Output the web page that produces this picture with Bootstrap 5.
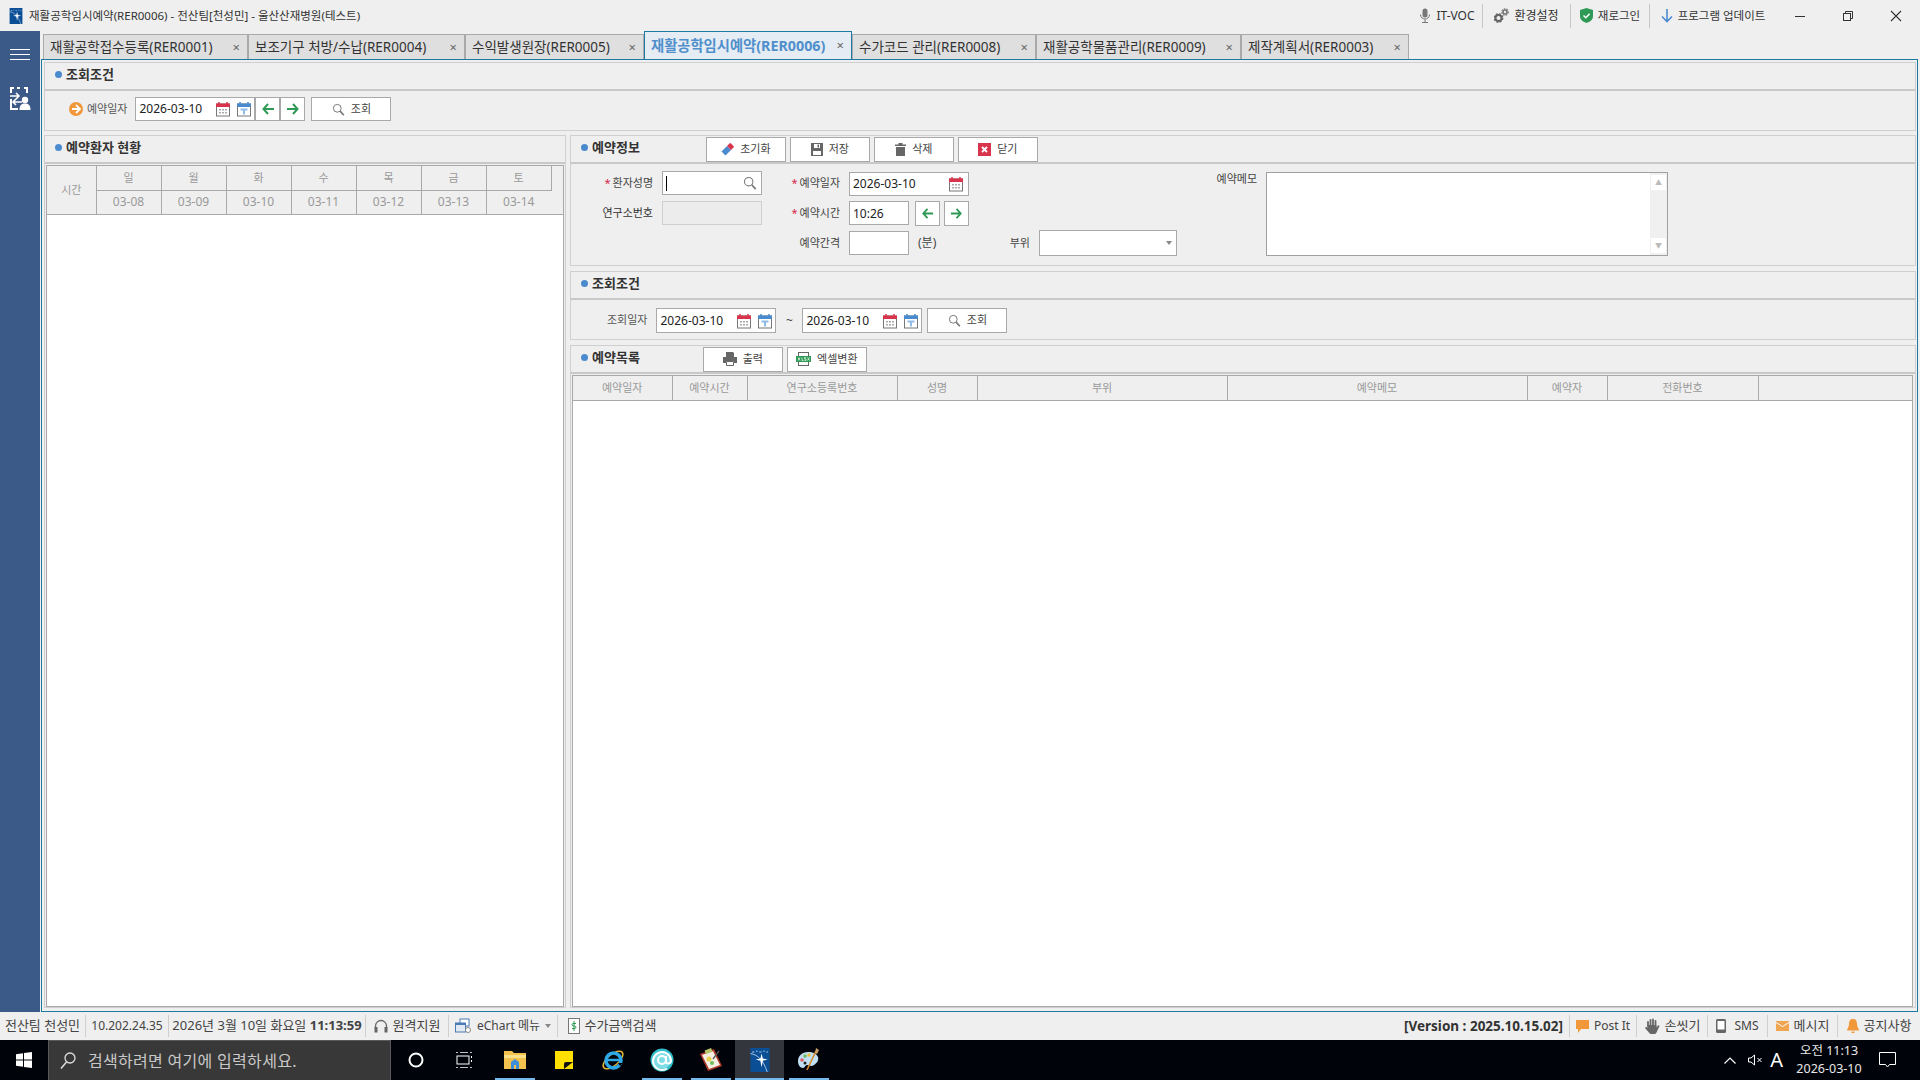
<!DOCTYPE html>
<html lang="ko">
<head>
    <meta charset="UTF-8">
    <meta name="viewport" content="width=device-width, initial-scale=1.0">
    <title>재활공학임시예약(RER0006)</title>
    <link href="https://cdn.jsdelivr.net/npm/bootstrap@5.3.2/dist/css/bootstrap.min.css" rel="stylesheet">
    <style>
        html, body { height: 100%; }
        body {
            background: #efefef;
            color: #333;
            font-family: "Noto Sans", "Noto Sans CJK KR", sans-serif;
            font-size: 11px;
            overflow: hidden;
        }
        svg { display: block; flex: none; }
        .shrink-ok { min-height: 0; min-width: 0; }

        /* title bar */
        .app-title { height: 31px; padding-left: 8px; font-size: 11.5px; }
        .app-title .logo { margin-right: 5px; }
        .top-tool { height: 24px; gap: 5px; border-right: 1px solid #c8c8c8; color: #333; font-size: 12px; }
        .top-tool.plain { border-right: 0; }
        .tt1 { width: 71px; } .tt2 { width: 88px; } .tt3 { width: 79px; font-size: 11.5px; } .tt4 { width: 126px; font-size: 11.5px; }
        .win-btn { width: 48px; height: 31px; }

        /* side menu */
        .side-menu { width: 40px; background: #3c5a87; padding: 18px 10px 0; }
        .burger { height: 11px; width: 20px; border-top: 1px solid #fff; border-bottom: 1px solid #fff; position: relative; margin-bottom: 27px; }
        .burger::after { content: ""; position: absolute; left: 0; right: 0; top: 4px; border-top: 1px solid #fff; }

        /* tabs */
        .tab-strip { height: 28px; padding-left: 3px; flex-wrap: nowrap; }
        .tab-item {
            height: 25px; margin-top: 3px;
            background: #dfdfdf; border: 1px solid #a9a9a9; border-bottom: 0;
            padding: 0 7px 0 6px; font-size: 13.5px; color: #333; line-height: 24px;
            white-space: nowrap;
        }
        .tab-item.on {
            height: 28px; margin-top: 0; margin-bottom: -1px; position: relative;
            background: #e6ecf3; border-color: #1d7aa3; color: #4f8fcb; font-weight: 700; font-size: 14.3px; line-height: 27px;
        }
        .tab-x { color: #666; font-size: 13px; font-weight: 400; }
        .t1 { width: 205px; } .t2 { width: 217px; } .t3 { width: 179px; } .t4 { width: 208px; }
        .t5 { width: 184px; } .t6 { width: 205px; } .t7 { width: 168px; }

        /* working area */
        .work { border: 1px solid #1d7aa3; margin-right: 2px; margin-left: 1px; padding: 2px 1px 3px 2px; gap: 4px; background: #efefef; }
        .sect { border: 1px solid #cfcfcf; }
        .sect-head { height: 26px; padding-left: 10px; border-bottom: 2px solid #c8c8c8; box-sizing: content-box; font-size: 13px; font-weight: 700; color: #333; }
        .sect-name { gap: 4px; padding-bottom: 3px; }
        .dot { width: 7px; height: 7px; border-radius: 50%; background: #4a8bd0; }
        .left-col { width: 522px; }
        .right-col { gap: 5px; margin-left: 4px; }

        .ctl-btn {
            width: 80px; height: 25px; padding: 0; border-radius: 0;
            background: #fff; border: 1px solid #a9a9a9; color: #444; font-size: 11px; gap: 6px;
        }
        .arrow-btn { width: 25px; height: 24px; padding: 0; border-radius: 0; background: #fff; border: 1px solid #a9a9a9; }
        .head-btns { gap: 4px; }
        .head-btns.b-a { margin-left: 66px; }
        .head-btns.b-b { margin-left: 63px; }

        .date-box { width: 120px; height: 24px; background: #fff; border: 1px solid #a9a9a9; padding-left: 3px; padding-right: 2px; font-size: 12px; color: #222; gap: 5px; }
        .date-box .val { flex: 1 1 auto; }
        .cap { color: #555; font-size: 11px; }

        .top-filter { height: 39px; padding: 0 0 3px 24px; }
        .top-filter .cap { margin: 0 8px 0 4px; }
        .top-filter .ctl-btn { height: 24px; margin-left: 6px; }
        .range-filter { height: 39px; padding: 2px 0 0 36px; }
        .range-filter .cap { margin-right: 9px; }
        .range-filter .tilde { width: 26px; text-align: center; font-size: 12px; color: #444; }
        .range-filter .date-box { height: 25px; }
        .range-filter .ctl-btn { margin-left: 5px; }

        /* reservation form */
        .resv-form {
            display: grid;
            grid-template-columns: 91px 100px 87px 120px 70px 138px 89px 402px;
            grid-template-rows: 30px 30px 30px;
            padding: 4px 0 7px 0;
            align-items: center;
        }
        .resv-form .date-box { margin-top: 1px; padding-right: 4px; }
        .lab { text-align: right; padding-right: 9px; color: #444; white-space: nowrap; }
        .lab.bold-ish { color: #333; }
        .req { color: #d6294a; font-size: 11px; margin-right: 2px; }
        .plain-input { height: 24px; padding: 0 3px; border-radius: 0; border: 1px solid #a9a9a9; font-size: 12px; background: #fff; color: #222; }
        .plain-input:disabled { background: #ececec; border-color: #cfcfcf; }
        .name-box { height: 24px; background: #fff; border: 1px solid #a9a9a9; padding: 0 4px 0 3px; }
        .caret-bar { width: 1px; height: 15px; background: #000; }
        .time-row { gap: 4px; }
        .time-row .plain-input { width: 60px; margin-right: 2px; }
        .time-row .arrow-btn { height: 25px; }
        .unit { padding-left: 9px; font-size: 12px; color: #444; }
        .select-box { height: 26px; background: #fff; border: 1px solid #a9a9a9; padding-right: 4px; }
        .caret-down { width: 0; height: 0; border: 3px solid transparent; border-top: 4px solid #888; border-bottom: 0; }
        .memo-lab { grid-column: 7; grid-row: 1 / span 3; align-self: start; padding-top: 3px; }
        .memo-box { grid-column: 8; grid-row: 1 / span 3; align-self: start; margin-top: 4px; height: 84px; background: #fff; border: 1px solid #a0a0a0; }
        .memo-bar { width: 17px; background: #f0f0f0; padding: 2px 1px; }
        .memo-arrow { height: 15px; background: #fff; color: #bbb; font-size: 7px; line-height: 15px; text-align: center; }

        /* grids */
        .grid-wrap { border: 1px solid #a9a9a9; background: #fff; margin: 1px 2px 0 1px; }
        .grid-wrap.gw-left { margin-right: 1px; }
        .table.grid-head { table-layout: fixed; margin: 0; background: #efefef; border-color: #a9a9a9; }
        .table.grid-head > :not(caption) > * > * {
            background: #efefef; color: #999; font-weight: 400; font-size: 11px;
            text-align: center; vertical-align: middle; padding: 0; border-color: #a9a9a9;
            border-width: 0 1px 1px 0; box-shadow: none;
        }
        .table.grid-head > :not(caption) > * > *:last-child { border-right: 0; }
        .table.grid-head > :not(caption) > .day-row > * { font-size: 12px; }
        .week-head tr { height: 24px; }
        .week-head .c-time { width: 49px; }
        .week-head .c-day { width: 65px; }
        .week-head .c-end { width: 12px; }
        .list-head tr { height: 24px; }
        .l1 { width: 99px; } .l2 { width: 75px; } .l3 { width: 150px; } .l4 { width: 80px; } .l5 { width: 250px; }
        .l6 { width: 300px; } .l7 { width: 80px; } .l8 { width: 151px; }

        /* status bar */
        .status-bar { height: 28px; background: #efefef; font-size: 13px; color: #444; }
        .st-item { height: 22px; gap: 5px; border-right: 1px solid #cfcfcf; white-space: nowrap; }
        .st-item.end { border-right: 0; }
        .st-lat { font-size: 12px; }
        .st-ver { font-size: 13.5px; font-weight: 700; color: #333; padding-right: 6px; }
        .s1 { width: 86px; } .s2 { width: 83px; } .s3 { width: 197px; } .s4 { width: 83px; } .s5 { width: 109px; } .s6 { width: 108px; }
        .s7 { width: 67px; } .s8 { width: 71px; } .s9 { width: 60px; } .s10 { width: 70px; } .s11 { width: 82px; }

        /* windows taskbar */
        .task-bar { height: 40px; background: #00040a; color: #fff; }
        .start-btn { width: 48px; }
        .search-box { width: 343px; background: #383838; border: 1px solid #5a5a5a; border-bottom: 0; padding-left: 11px; gap: 12px; color: #c8c8c8; font-size: 16px; letter-spacing: .3px; }
        .task-slot { width: 48px; }
        .task-first { margin-left: 1px; }
        .task-last { margin-right: 2px; }
        .app-slot { width: 49px; position: relative; }
        .app-slot.run::after { content: ""; position: absolute; left: 5px; right: 4px; bottom: 0; height: 2px; background: #76b9ed; }
        .app-slot.cur { background: #33363d; }
        .app-slot.cur::after { left: 0; right: 0; }
        .tray { font-size: 12.5px; }
        .tray-clock { width: 76px; text-align: center; line-height: 18px; color: #e8e8e8; }
        .tray-note { margin-left: 12px; margin-right: 24px; }
    </style>
</head>
<body class="d-flex flex-column">

<svg width="0" height="0" class="position-absolute">
    <defs>
        <symbol id="i-cal" viewBox="0 0 16 16">
            <rect x="1.5" y="3" width="13" height="12" fill="#fff" stroke="#777"/>
            <rect x="1" y="2.5" width="14" height="3.5" fill="#d8344c"/>
            <path d="M4 1v3M12 1v3" stroke="#d8344c" stroke-width="1.5"/>
            <path d="M4 8h2v1.5H4zM7 8h2v1.5H7zM10 8h2v1.5h-2zM4 11h2v1.5H4zM7 11h2v1.5H7zM10 11h2v1.5h-2z" fill="#aaa"/>
        </symbol>
        <symbol id="i-today" viewBox="0 0 16 16">
            <rect x="1.5" y="3" width="13" height="12" fill="#fff" stroke="#777"/>
            <rect x="1" y="2.5" width="14" height="3.5" fill="#4a8bd0"/>
            <path d="M4 1v3M12 1v3" stroke="#4a8bd0" stroke-width="1.5"/>
            <path d="M4.5 7.5h7v2H9v4H7v-4H4.5z" fill="#8fbde8"/>
        </symbol>
        <symbol id="i-search" viewBox="0 0 16 16">
            <circle cx="6.5" cy="6.5" r="4.8" fill="none" stroke="#777" stroke-width="1.2"/>
            <path d="M10 10l4.5 5" stroke="#777" stroke-width="2"/>
        </symbol>
        <symbol id="i-left" viewBox="0 0 14 14">
            <path d="M7 2L2.5 7 7 12M3 7h10" fill="none" stroke="#2f9a55" stroke-width="2"/>
        </symbol>
        <symbol id="i-right" viewBox="0 0 14 14">
            <path d="M7 2l4.500 5L7 12M11 7H1" fill="none" stroke="#2f9a55" stroke-width="2"/>
        </symbol>
        <symbol id="i-app" viewBox="0 0 24 30">
            <rect width="24" height="30" fill="#0a4f96"/>
            <path d="M2 5h3M7 4h2M11 5h3M16 4h2M20 5h2" stroke="#cfe3f5" stroke-width="1"/>
            <path d="M0 7c8 1 16 7 21 23" fill="none" stroke="#cfe0f0" stroke-width="1"/>
            <path d="M14 7l1.5 6 6 1.5-6 1.5L14 24l-1.5-8-6-1.5 6-1.5z" fill="#fff"/>
        </symbol>
    </defs>
</svg>

<!-- 타이틀바 -->
<header class="app-title d-flex align-items-center flex-shrink-0">
    <svg class="logo" width="16" height="16"><use href="#i-app"/></svg>
    <span>재활공학임시예약(RER0006) - 전산팀[천성민] - 울산산재병원(테스트)</span>
    <div class="ms-auto d-flex align-items-center">
        <div class="top-tool tt1 d-flex align-items-center justify-content-center">
            <svg width="12" height="15" viewBox="0 0 12 15"><rect x="3.5" y="0.5" width="5" height="9" rx="2.5" fill="#777"/><path d="M1.5 6.5c0 6 9 6 9 0M6 11.5V14M3 14.5h6" fill="none" stroke="#777"/></svg>
            <span>IT-VOC</span>
        </div>
        <div class="top-tool tt2 d-flex align-items-center justify-content-center">
            <svg width="15" height="15" viewBox="0 0 15 15">
                <circle cx="4.5" cy="10" r="3" fill="none" stroke="#666" stroke-width="2"/>
                <circle cx="4.5" cy="10" r="4.2" fill="none" stroke="#666" stroke-width="1.4" stroke-dasharray="2 1.3"/>
                <circle cx="11" cy="4" r="2" fill="none" stroke="#777" stroke-width="1.6"/>
                <circle cx="11" cy="4" r="3.2" fill="none" stroke="#777" stroke-width="1.2" stroke-dasharray="1.6 1.1"/>
            </svg>
            <span>환경설정</span>
        </div>
        <div class="top-tool tt3 d-flex align-items-center justify-content-center">
            <svg width="13" height="15" viewBox="0 0 13 15"><path d="M6.5 0L13 2v6c0 4-3.5 6-6.5 7C3.5 14 0 12 0 8V2z" fill="#2f9a55"/><path d="M3.5 7.5l2.3 2.3 3.8-4" fill="none" stroke="#fff" stroke-width="1.5"/></svg>
            <span>재로그인</span>
        </div>
        <div class="top-tool tt4 plain d-flex align-items-center justify-content-center">
            <svg width="12" height="14" viewBox="0 0 12 14"><path d="M6 0v12M1 7.5l5 5 5-5" fill="none" stroke="#4a8bd0" stroke-width="1.6"/></svg>
            <span>프로그램 업데이트</span>
        </div>
        <div class="win-btn d-flex align-items-center justify-content-center">
            <svg width="10" height="10" viewBox="0 0 10 10"><path d="M0 5.5h10" stroke="#333"/></svg>
        </div>
        <div class="win-btn d-flex align-items-center justify-content-center">
            <svg width="10" height="10" viewBox="0 0 10 10"><rect x="0.5" y="2.5" width="7" height="7" fill="none" stroke="#333"/><path d="M2.5 2.5v-2h7v7h-2" fill="none" stroke="#333"/></svg>
        </div>
        <div class="win-btn d-flex align-items-center justify-content-center">
            <svg width="12" height="12" viewBox="0 0 12 12"><path d="M1 1l10 10M11 1L1 11" stroke="#333" stroke-width="1.1"/></svg>
        </div>
    </div>
</header>

<div class="d-flex flex-grow-1 shrink-ok">
    <!-- 좌측 메뉴 -->
    <aside class="side-menu flex-shrink-0">
        <div class="burger"></div>
        <svg width="21" height="23" viewBox="0 0 21 23">
            <path d="M1 6V1h3M7 1h3M14 1h3v5M1 12v10h7" fill="none" stroke="#fff" stroke-width="2"/>
            <path d="M0 9h9M6 6l3 3-3 3M12 15H3M6 12l-3 3 3 3" fill="none" stroke="#fff" stroke-width="1.6"/>
            <circle cx="15" cy="13" r="3.2" fill="#fff"/>
            <path d="M9.5 23c0-5 2-6.5 5.5-6.5s5.5 1.5 5.5 6.5z" fill="#fff"/>
        </svg>
    </aside>

    <main class="d-flex flex-column flex-grow-1 shrink-ok">
        <!-- 탭 -->
        <ul class="nav tab-strip">
            <li class="tab-item t1 d-flex justify-content-between"><span>재활공학접수등록(RER0001)</span><span class="tab-x">×</span></li>
            <li class="tab-item t2 d-flex justify-content-between"><span>보조기구 처방/수납(RER0004)</span><span class="tab-x">×</span></li>
            <li class="tab-item t3 d-flex justify-content-between"><span>수익발생원장(RER0005)</span><span class="tab-x">×</span></li>
            <li class="tab-item t4 on d-flex justify-content-between"><span>재활공학임시예약(RER0006)</span><span class="tab-x">×</span></li>
            <li class="tab-item t5 d-flex justify-content-between"><span>수가코드 관리(RER0008)</span><span class="tab-x">×</span></li>
            <li class="tab-item t6 d-flex justify-content-between"><span>재활공학물품관리(RER0009)</span><span class="tab-x">×</span></li>
            <li class="tab-item t7 d-flex justify-content-between"><span>제작계획서(RER0003)</span><span class="tab-x">×</span></li>
        </ul>

        <div class="work d-flex flex-column flex-grow-1 shrink-ok">
            <!-- 조회조건 (상단) -->
            <section class="sect">
                <div class="sect-head d-flex align-items-center"><span class="sect-name d-flex align-items-center"><i class="dot"></i>조회조건</span></div>
                <div class="top-filter d-flex align-items-center">
                    <svg width="14" height="14" viewBox="0 0 14 14"><circle cx="7" cy="7" r="7" fill="#f0983a"/><path d="M7 3l4 4-4 4M10.5 7H3" fill="none" stroke="#fff" stroke-width="1.8"/></svg>
                    <span class="cap">예약일자</span>
                    <div class="date-box d-flex align-items-center">
                        <span class="val">2026-03-10</span>
                        <svg width="16" height="16"><use href="#i-cal"/></svg>
                        <svg width="16" height="16"><use href="#i-today"/></svg>
                    </div>
                    <button type="button" class="btn arrow-btn d-flex align-items-center justify-content-center"><svg width="14" height="14"><use href="#i-left"/></svg></button>
                    <button type="button" class="btn arrow-btn d-flex align-items-center justify-content-center"><svg width="14" height="14"><use href="#i-right"/></svg></button>
                    <button type="button" class="btn ctl-btn d-flex align-items-center justify-content-center"><svg width="13" height="13"><use href="#i-search"/></svg>조회</button>
                </div>
            </section>

            <div class="d-flex flex-grow-1 shrink-ok">
                <!-- 예약환자 현황 -->
                <section class="sect left-col d-flex flex-column flex-shrink-0">
                    <div class="sect-head d-flex align-items-center"><span class="sect-name d-flex align-items-center"><i class="dot"></i>예약환자 현황</span></div>
                    <div class="grid-wrap gw-left flex-grow-1 d-flex flex-column">
                        <table class="table grid-head week-head">
                            <thead>
                                <tr>
                                    <th rowspan="2" class="c-time">시간</th>
                                    <th class="c-day">일</th><th class="c-day">월</th><th class="c-day">화</th><th class="c-day">수</th><th class="c-day">목</th><th class="c-day">금</th><th class="c-day">토</th>
                                    <th rowspan="2" class="c-end"></th>
                                </tr>
                                <tr class="day-row">
                                    <th>03-08</th><th>03-09</th><th>03-10</th><th>03-11</th><th>03-12</th><th>03-13</th><th>03-14</th>
                                </tr>
                            </thead>
                        </table>
                    </div>
                </section>

                <div class="right-col d-flex flex-column flex-grow-1 shrink-ok">
                    <!-- 예약정보 -->
                    <section class="sect">
                        <div class="sect-head d-flex align-items-center">
                            <span class="sect-name d-flex align-items-center"><i class="dot"></i>예약정보</span>
                            <div class="head-btns b-a d-flex">
                                <button type="button" class="btn ctl-btn d-flex align-items-center justify-content-center">
                                    <svg width="13" height="13" viewBox="0 0 13 13"><path d="M0.5 8.5L6 3l4 4-5.5 5.5z" fill="#4a8bd0"/><path d="M6 3l2.5-2.5a1 1 0 0 1 1.5 0l2.5 2.5a1 1 0 0 1 0 1.5L10 7z" fill="#d8344c"/></svg>초기화
                                </button>
                                <button type="button" class="btn ctl-btn d-flex align-items-center justify-content-center">
                                    <svg width="12" height="13" viewBox="0 0 12 13"><path d="M0 0h12v13H0z" fill="#666"/><path d="M3 1h6v4H3zM2 8h8v4H2z" fill="#fff"/><path d="M6.5 1.5h1.5v3H6.5z" fill="#666"/></svg>저장
                                </button>
                                <button type="button" class="btn ctl-btn d-flex align-items-center justify-content-center">
                                    <svg width="11" height="13" viewBox="0 0 11 13"><path d="M0 1.5h11V3H0zM3.5 0h4v1.5h-4zM1 4h9v9H1z" fill="#666"/></svg>삭제
                                </button>
                                <button type="button" class="btn ctl-btn d-flex align-items-center justify-content-center">
                                    <svg width="13" height="13" viewBox="0 0 13 13"><rect width="13" height="13" fill="#d8344c"/><path d="M4 4l5 5M9 4l-5 5" stroke="#fff" stroke-width="1.8"/></svg>닫기
                                </button>
                            </div>
                        </div>
                        <form class="resv-form">
                            <label class="lab"><span class="req">*</span>환자성명</label>
                            <div class="name-box d-flex align-items-center justify-content-between">
                                <i class="caret-bar"></i>
                                <svg width="14" height="14"><use href="#i-search"/></svg>
                            </div>
                            <label class="lab"><span class="req">*</span>예약일자</label>
                            <div class="date-box d-flex align-items-center">
                                <span class="val">2026-03-10</span>
                                <svg width="16" height="16"><use href="#i-cal"/></svg>
                            </div>
                            <div></div><div></div>
                            <label class="lab memo-lab">예약메모</label>
                            <div class="memo-box d-flex justify-content-end">
                                <div class="memo-bar d-flex flex-column justify-content-between">
                                    <div class="memo-arrow">▲</div>
                                    <div class="memo-arrow">▼</div>
                                </div>
                            </div>

                            <label class="lab bold-ish">연구소번호</label>
                            <input type="text" class="form-control plain-input" disabled>
                            <label class="lab"><span class="req">*</span>예약시간</label>
                            <div class="time-row d-flex align-items-center">
                                <input type="text" class="form-control plain-input" value="10:26">
                                <button type="button" class="btn arrow-btn d-flex align-items-center justify-content-center"><svg width="13" height="13"><use href="#i-left"/></svg></button>
                                <button type="button" class="btn arrow-btn d-flex align-items-center justify-content-center"><svg width="13" height="13"><use href="#i-right"/></svg></button>
                            </div>
                            <div></div><div></div>

                            <div></div><div></div>
                            <label class="lab">예약간격</label>
                            <div class="d-flex align-items-center">
                                <input type="text" class="form-control plain-input w-50">
                                <span class="unit">(분)</span>
                            </div>
                            <label class="lab">부위</label>
                            <div class="select-box d-flex align-items-center justify-content-end"><i class="caret-down"></i></div>
                        </form>
                    </section>

                    <!-- 조회조건 (기간) -->
                    <section class="sect">
                        <div class="sect-head d-flex align-items-center"><span class="sect-name d-flex align-items-center"><i class="dot"></i>조회조건</span></div>
                        <div class="range-filter d-flex align-items-center">
                            <span class="cap">조회일자</span>
                            <div class="date-box d-flex align-items-center">
                                <span class="val">2026-03-10</span>
                                <svg width="16" height="16"><use href="#i-cal"/></svg>
                                <svg width="16" height="16"><use href="#i-today"/></svg>
                            </div>
                            <span class="tilde">~</span>
                            <div class="date-box d-flex align-items-center">
                                <span class="val">2026-03-10</span>
                                <svg width="16" height="16"><use href="#i-cal"/></svg>
                                <svg width="16" height="16"><use href="#i-today"/></svg>
                            </div>
                            <button type="button" class="btn ctl-btn d-flex align-items-center justify-content-center"><svg width="13" height="13"><use href="#i-search"/></svg>조회</button>
                        </div>
                    </section>

                    <!-- 예약목록 -->
                    <section class="sect flex-grow-1 d-flex flex-column shrink-ok">
                        <div class="sect-head d-flex align-items-center">
                            <span class="sect-name d-flex align-items-center"><i class="dot"></i>예약목록</span>
                            <div class="head-btns b-b d-flex">
                                <button type="button" class="btn ctl-btn d-flex align-items-center justify-content-center">
                                    <svg width="14" height="14" viewBox="0 0 14 14"><path d="M3 0h7l1 1v4H3z" fill="#666"/><path d="M0 5h14v6h-3V9H3v2H0z" fill="#666"/><path d="M3.5 9.5h7v4h-7z" fill="#fff" stroke="#666"/></svg>출력
                                </button>
                                <button type="button" class="btn ctl-btn d-flex align-items-center justify-content-center">
                                    <svg width="15" height="14" viewBox="0 0 15 14"><rect x="2.5" y="0.5" width="10" height="13" fill="#fff" stroke="#666"/><rect y="4" width="15" height="6" fill="#2f9a55"/><path d="M2 5.5l2 3M4 5.5l-2 3M6 5.5v3h1.5M10 5.5H8.5v1.5H10v1.5H8.5M11.5 5.5l2 3M13.5 5.5l-2 3" fill="none" stroke="#fff" stroke-width="0.7"/></svg>엑셀변환
                                </button>
                            </div>
                        </div>
                        <div class="grid-wrap flex-grow-1">
                            <table class="table grid-head list-head">
                                <thead>
                                    <tr>
                                        <th class="l1">예약일자</th><th class="l2">예약시간</th><th class="l3">연구소등록번호</th><th class="l4">성명</th><th class="l5">부위</th><th class="l6">예약메모</th><th class="l7">예약자</th><th class="l8">전화번호</th><th></th>
                                    </tr>
                                </thead>
                            </table>
                        </div>
                    </section>
                </div>
            </div>
        </div>
    </main>
</div>

<!-- 상태바 -->
<footer class="status-bar d-flex align-items-center flex-shrink-0">
    <div class="st-item s1 d-flex align-items-center justify-content-center">전산팀 천성민</div>
    <div class="st-item s2 st-lat d-flex align-items-center justify-content-center">10.202.24.35</div>
    <div class="st-item s3 d-flex align-items-center justify-content-center"><span>2026년 3월 10일 화요일 <b>11:13:59</b></span></div>
    <div class="st-item s4 d-flex align-items-center justify-content-center">
        <svg width="14" height="14" viewBox="0 0 14 14"><path d="M1.5 10V7a5.5 5.5 0 0 1 11 0v3" fill="none" stroke="#666" stroke-width="1.3"/><rect x="0.5" y="8" width="3" height="5.5" fill="#666"/><rect x="10.5" y="8" width="3" height="5.5" fill="#666"/></svg>
        원격지원
    </div>
    <div class="st-item s5 d-flex align-items-center justify-content-center">
        <svg width="17" height="16" viewBox="0 0 17 16"><rect x="5" y="1" width="9" height="7" fill="#fff" stroke="#4a7bb5"/><rect x="0.5" y="5" width="10" height="9" fill="#dfe8f3" stroke="#4a7bb5"/><rect x="0.5" y="5" width="10" height="2" fill="#4a7bb5"/><circle cx="13" cy="12" r="2.5" fill="#fff" stroke="#888"/></svg>
        <span class="st-lat">eChart 메뉴</span> <span class="caret-down"></span>
    </div>
    <div class="st-item s6 end d-flex align-items-center justify-content-center">
        <svg width="12" height="16" viewBox="0 0 12 16"><rect x="0.5" y="0.5" width="11" height="15" fill="#fff" stroke="#777"/><path d="M6 3v10" stroke="#2f9a55"/><path d="M8 5.5H5a1.3 1.3 0 0 0 0 2.5h2a1.3 1.3 0 0 1 0 2.5H4" fill="none" stroke="#2f9a55"/></svg>
        수가금액검색
    </div>
    <div class="ms-auto d-flex align-items-center">
        <div class="st-item st-ver d-flex align-items-center">[Version : 2025.10.15.02]</div>
        <div class="st-item s7 st-lat d-flex align-items-center justify-content-center">
            <svg width="13" height="13" viewBox="0 0 13 13"><path d="M0 0h13v9H5l-3 4V9H0z" fill="#f0983a"/></svg>Post It
        </div>
        <div class="st-item s8 d-flex align-items-center justify-content-center">
            <svg width="16" height="16" viewBox="0 0 16 16">
                <path d="M4 8V4M6.5 7V2M9 7V1.500M11.5 8V3" fill="none" stroke="#666" stroke-width="1.8" stroke-linecap="round"/>
                <path d="M3.5 7h9v2.500L14.500 7l1 1-3 6.500a2 2 0 0 1-2 1.500H7a2 2 0 0 1-1.500-.7L1 10l1-1.200 1.500 1z" fill="#666"/>
            </svg>손씻기
        </div>
        <div class="st-item s9 st-lat d-flex align-items-center justify-content-center">
            <svg width="10" height="14" viewBox="0 0 10 14"><rect width="10" height="14" rx="1.5" fill="#666"/><rect x="1.5" y="2" width="7" height="8.5" fill="#fff"/></svg>&nbsp;SMS
        </div>
        <div class="st-item s10 d-flex align-items-center justify-content-center">
            <svg width="13" height="10" viewBox="0 0 13 10"><rect width="13" height="10" fill="#f0a650"/><path d="M0 1.5l6.5 4 6.5-4" fill="none" stroke="#fff"/></svg>메시지
        </div>
        <div class="st-item s11 end d-flex align-items-center justify-content-center">
            <svg width="12" height="14" viewBox="0 0 12 14"><path d="M6 0c3 0 4 2 4 5 0 3 2 5 2 6.5H0C0 10 2 8 2 5c0-3 1-5 4-5z" fill="#f0983a"/><path d="M4.5 12.500h3V14h-3z" fill="#f0983a"/></svg>공지사항
        </div>
    </div>
</footer>

<!-- 작업표시줄 -->
<nav class="task-bar d-flex flex-shrink-0">
    <div class="start-btn d-flex align-items-center justify-content-center">
        <svg width="16" height="16" viewBox="0 0 16 16"><path d="M0 2.2L7 1.2V7.5H0zM8 1L16 0v7.5H8zM0 8.5h7v6.3l-7-1zM8 8.5h8V16l-8-1.1z" fill="#fff"/></svg>
    </div>
    <div class="search-box d-flex align-items-center">
        <svg width="16" height="18" viewBox="0 0 16 18"><circle cx="10" cy="6" r="5" fill="none" stroke="#ddd" stroke-width="1.3"/><path d="M6.5 10L1 16.5" stroke="#ddd" stroke-width="1.5"/></svg>
        <span>검색하려면 여기에 입력하세요.</span>
    </div>
    <div class="task-slot task-first d-flex align-items-center justify-content-center">
        <svg width="16" height="16" viewBox="0 0 16 16"><circle cx="8" cy="8" r="6.5" fill="none" stroke="#fff" stroke-width="2"/></svg>
    </div>
    <div class="task-slot task-last d-flex align-items-center justify-content-center">
        <svg width="16" height="16" viewBox="0 0 16 16"><path d="M0 0h2M0 16h2M4 0h8M4 16h8M14 0h2M14 16h2" stroke="#fff" stroke-width="1.5"/><rect x="1" y="4" width="12" height="8" fill="none" stroke="#fff"/><path d="M15.5 4v8" stroke="#fff" stroke-dasharray="2 2"/></svg>
    </div>
    <div class="app-slot run d-flex align-items-center justify-content-center">
        <svg width="22" height="20" viewBox="0 0 22 20"><path d="M0 1h8l2 2h12v16H0z" fill="#f2c14e"/><path d="M0 5h22v3H0z" fill="#fbe08a"/><path d="M7 12l4-3 4 3v7h-3v-4h-2v4H7z" fill="#3f8fd8"/></svg>
    </div>
    <div class="app-slot d-flex align-items-center justify-content-center">
        <svg width="18" height="18" viewBox="0 0 18 18"><path d="M0 0h18v18H0z" fill="#ffe000"/><path d="M9 18V13a2 2 0 0 1 2-2h7z" fill="#111"/></svg>
    </div>
    <div class="app-slot d-flex align-items-center justify-content-center">
        <svg width="24" height="24" viewBox="0 0 24 24"><ellipse cx="12" cy="12" rx="12" ry="5.5" transform="rotate(-40 12 12)" fill="none" stroke="#e3b232" stroke-width="1.5"/><circle cx="12.5" cy="12.5" r="7.5" fill="none" stroke="#2ea8e6" stroke-width="3.5"/><path d="M6 12h13" stroke="#2ea8e6" stroke-width="2.5"/><path d="M17 15h5l-3 3z" fill="#00040a"/></svg>
    </div>
    <div class="app-slot run d-flex align-items-center justify-content-center">
        <svg width="24" height="24" viewBox="0 0 24 24"><circle cx="12" cy="12" r="11.5" fill="#30bcc9"/><circle cx="12" cy="12" r="9" fill="#7fdde6"/><circle cx="12" cy="12" r="4" fill="none" stroke="#fff" stroke-width="2"/><path d="M16 8v5a2.5 2.5 0 0 0 5 0 9 9 0 1 0-4 7.5" fill="none" stroke="#fff" stroke-width="2"/></svg>
    </div>
    <div class="app-slot run d-flex align-items-center justify-content-center">
        <svg width="22" height="24" viewBox="0 0 22 24"><path d="M0 6L14 1l8 17-14 5z" fill="#b23a2a"/><path d="M2 7L13 3l7 14-11 4z" fill="#f4efe4"/><rect x="5" y="1" width="7" height="4" transform="rotate(-20 9 3)" fill="#b8c56a"/><circle cx="9" cy="11" r="2.5" fill="#e8d44a"/><circle cx="12" cy="15" r="2" fill="#6fbb5a"/><path d="M13 11l6-8" stroke="#555" stroke-width="1.3"/></svg>
    </div>
    <div class="app-slot cur run d-flex align-items-center justify-content-center">
        <svg width="24" height="24"><use href="#i-app"/></svg>
    </div>
    <div class="app-slot run d-flex align-items-center justify-content-center">
        <svg width="24" height="24" viewBox="0 0 24 24"><path d="M11 4C5 4 1 8 1 13c0 4 2 7 5 7 2 0 2-3 4-3 3 0 4 2 7 0 3-2 5-5 4-8-1-3-5-5-10-5z" fill="#bfe0f5"/><circle cx="5" cy="12" r="1.8" fill="#e06060"/><circle cx="8" cy="8" r="1.8" fill="#6fbb5a"/><circle cx="12" cy="7" r="1.8" fill="#f0c040"/><circle cx="8" cy="15" r="1.5" fill="#222"/><path d="M19 3L10 22" stroke="#d48a2a" stroke-width="1.6"/><path d="M19 0l3 2-2 4-2-1z" fill="#caa06a"/></svg>
    </div>
    <div class="tray ms-auto d-flex align-items-center">
        <svg class="me-2" width="12" height="7" viewBox="0 0 12 7"><path d="M0.5 6.5L6 1l5.5 5.5" fill="none" stroke="#fff" stroke-width="1.2"/></svg>
        <svg class="ms-1" width="14" height="12" viewBox="0 0 14 12"><path d="M0.5 4h2.5L6.5 1v10L3 8H0.5z" fill="none" stroke="#fff"/><path d="M9.5 4l4 4M13.5 4l-4 4" stroke="#fff"/></svg>
        <span class="ms-2 fs-5 fw-normal">A</span>
        <div class="tray-clock ms-2">오전 11:13<br>2026-03-10</div>
        <svg class="tray-note" width="17" height="16" viewBox="0 0 17 16"><path d="M0.5 0.5h16v12h-6l-2 2.5-2-2.5h-6z" fill="none" stroke="#fff"/></svg>
    </div>
</nav>

<script src="https://cdn.jsdelivr.net/npm/bootstrap@5.3.2/dist/js/bootstrap.bundle.min.js"></script>
</body>
</html>
